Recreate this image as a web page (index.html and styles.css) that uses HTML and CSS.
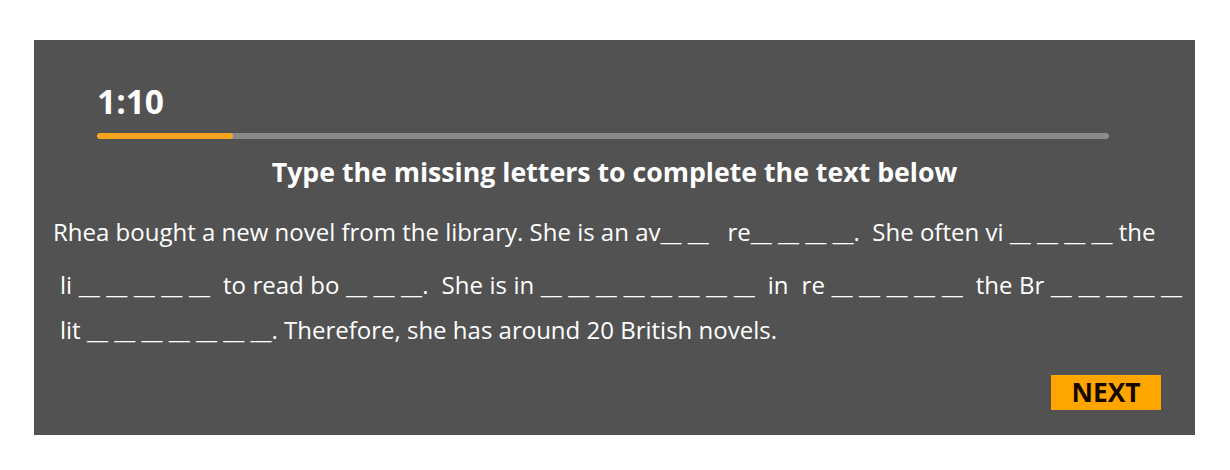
FILE: index.html
```html
<!DOCTYPE html>
<html lang="en">
<head>
<meta charset="utf-8">
<title>Missing letters</title>
<link rel="stylesheet" href="styles.css">
</head>
<body>
<main class="panel">
  <div class="timer">1:10</div>
  <div class="track"><div class="fill" style="width: 13.4%"></div></div>
  <h1 class="heading">Type the missing letters to complete the text below</h1>
  <div class="passage">
    <p class="line first">Rhea bought a new novel from the library. She is an av__ __   re__ __ __ __.  She often vi __ __ __ __ the</p>
    <p class="line wide">li __ __ __ __ __  to read bo __ __ __.  She is in __ __ __ __ __ __ __ __  in  re __ __ __ __ __  the Br __ __ __ __ __</p>
    <p class="line">lit __ __ __ __ __ __ __. Therefore, she has around 20 British novels.</p>
  </div>
  <div class="actions"><button class="next" type="button">NEXT</button></div>
</main>
</body>
</html>
```
FILE: styles.css
```css
html, body {
  margin: 0;
  padding: 0;
  background: #ffffff;
}
body {
  padding: 40px 35px 35px 34px;
  font-family: "Open Sans", "Liberation Sans", sans-serif;
}
.panel {
  background: #525252;
  color: #ffffff;
  padding: 41px 34px 25px 19px;
  display: flex;
  flex-direction: column;
}
.timer {
  font-size: 33.5px;
  line-height: 40px;
  font-weight: 700;
  margin-left: 44px;
}
.track {
  margin: 12px 52px 0 44px;
  height: 6px;
  border-radius: 3px;
  background: #8a8a8a;
  overflow: hidden;
}
.fill {
  height: 100%;
  background: #f5a41c;
  border-radius: 3px;
}
.heading {
  margin: 17px 0 0 0;
  font-size: 26.7px;
  line-height: 32px;
  font-weight: 700;
  text-align: center;
  padding-left: 15px;
}
.passage {
  margin-top: 21px;
}
.line {
  margin: 0;
  font-size: 24px;
  line-height: 45px;
  white-space: pre;
  padding-left: 7px;
}
.line.first {
  padding-left: 0;
  margin-bottom: 8px;
}
.line.wide {
  word-spacing: 0.3px;
}
.actions {
  margin-top: 23px;
  display: flex;
  justify-content: flex-end;
}
.next {
  width: 110px;
  height: 35px;
  border: none;
  background: #ffa500;
  color: #140800;
  font-family: "Open Sans", "Liberation Sans", sans-serif;
  font-weight: 700;
  font-size: 26.4px;
  line-height: 35px;
  padding: 0;
}
```
